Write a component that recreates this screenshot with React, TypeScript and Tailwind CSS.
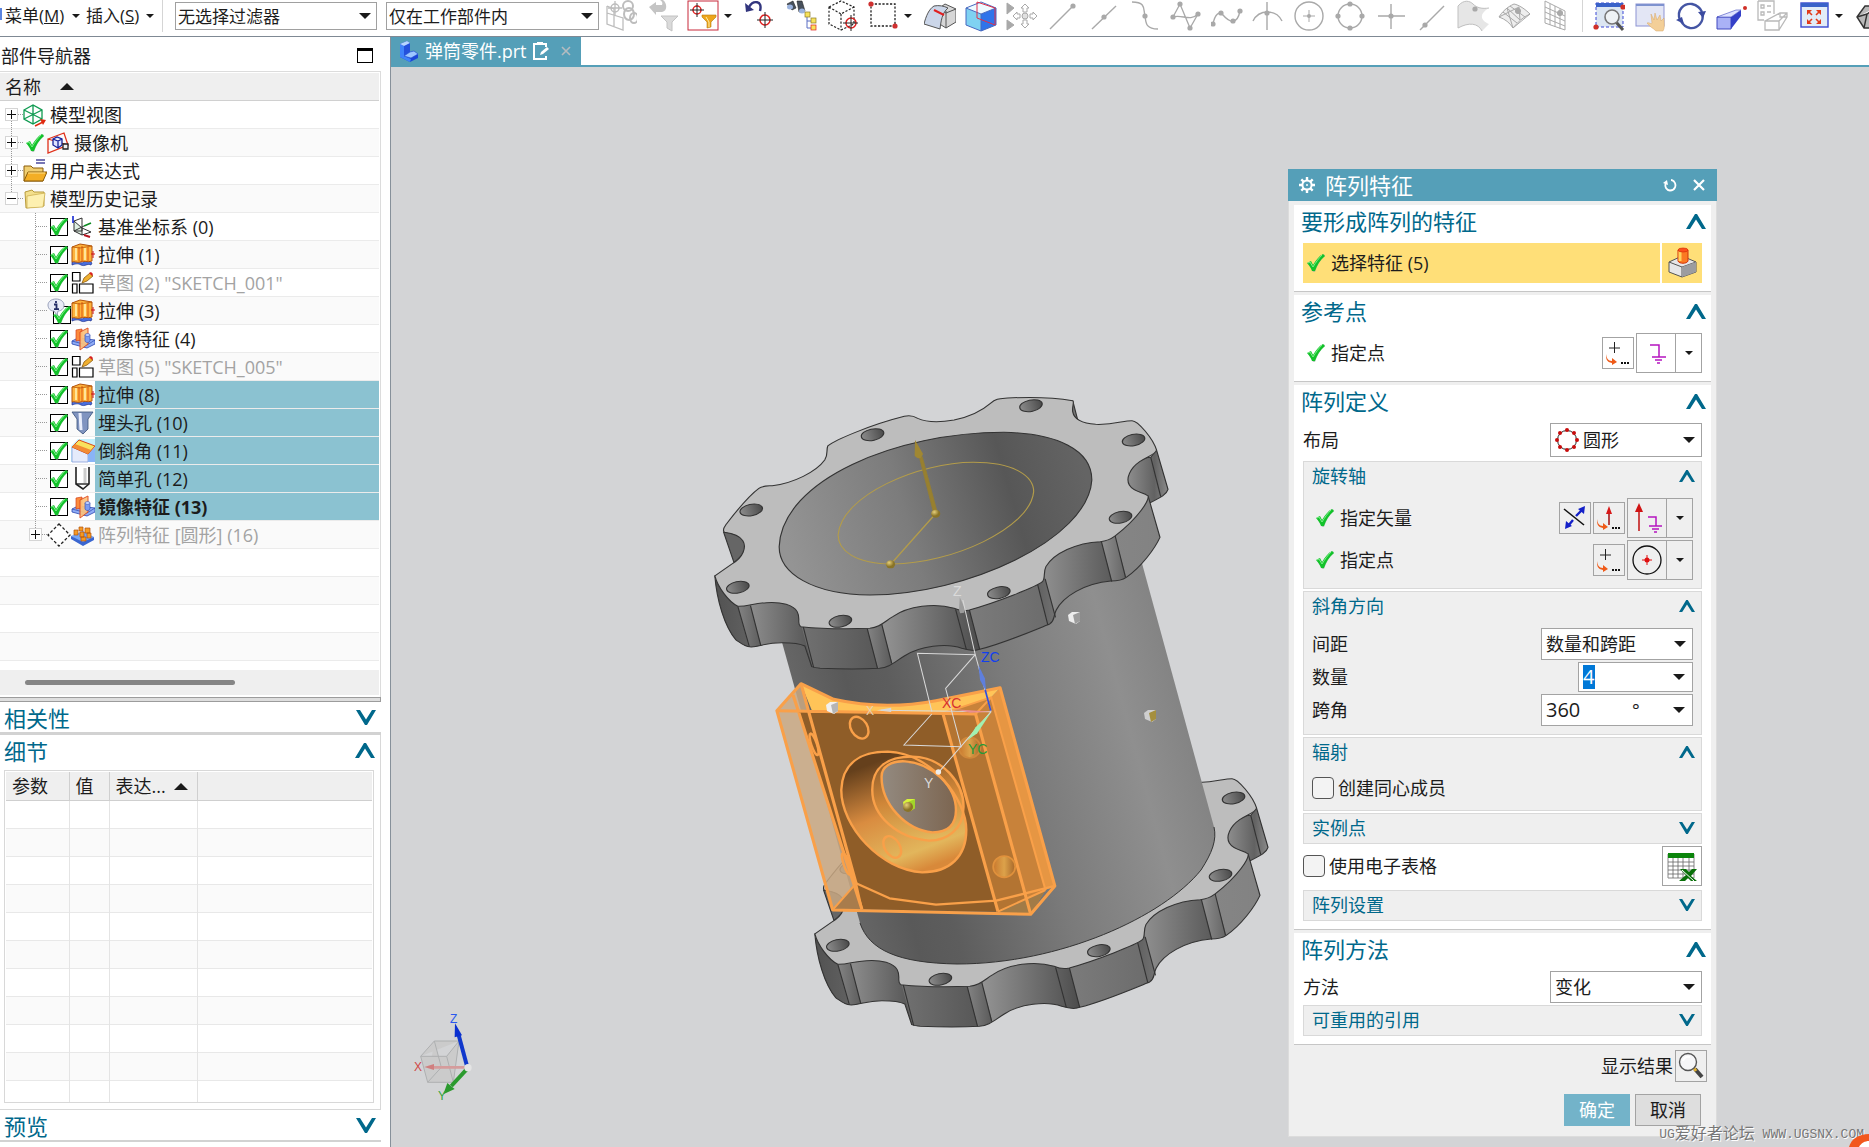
import { useState } from "react";
import type { ReactNode } from "react";

/* ---------- shared bits ---------- */

function Tri({ up, small }: { up?: boolean; small?: boolean }) {
  return (
    <svg
      viewBox="0 0 12 6"
      preserveAspectRatio="none"
      className={`pointer-events-none shrink-0 ${small ? "h-1 w-2" : up ? "h-[7px] w-[14px]" : "h-[6px] w-3"}`}
      aria-hidden="true"
    >
      <path d={up ? "M0 6L6 0L12 6Z" : "M0 0H12L6 6Z"} fill="#1a1a1a" />
    </svg>
  );
}

function Chevron({ open, small }: { open: boolean; small?: boolean }) {
  return (
    <svg
      viewBox="0 0 20 15"
      className={`shrink-0 ${small ? "h-3 w-4" : "h-[15px] w-5"}`}
      aria-hidden="true"
    >
      <path
        d={open ? "M0 15L9 0H11L20 15H16L10 5.500L4 15Z" : "M0 0H4L10 9.500L16 0H20L11 15H9Z"}
        fill="#00688b"
      />
    </svg>
  );
}

function GreenCheck() {
  return (
    <svg viewBox="0 0 18 18" className="h-[18px] w-[18px] shrink-0" aria-hidden="true">
      <path d="M1 10L4 8L7 12C9 7 12 3 17 0L18 2C13 6 10 12 8 18H6C5 15 3 12 1 10Z" fill="#8fa69a" opacity=".6" />
      <path d="M0 9L4 7L6 11C9 6 12 2 16 0L18 2C13 6 10 11 8 17H5C4 14 2 11 0 9Z" fill="#12c22a" />
      <path d="M1 9L3 8L6 13C9 8 12 4 15 1" fill="none" stroke="#7df08a" strokeWidth="1" />
    </svg>
  );
}

/* ---------- top toolbar ---------- */

const G = "#a9a9a9";

function Target({ x, y, r = 4, c = "#e02020", k = "#222" }: { x: number; y: number; r?: number; c?: string; k?: string }) {
  return (
    <g fill="none">
      <circle cx={x} cy={y} r={r} stroke={c} strokeWidth="1.5" />
      <path d={`M${x - r - 3} ${y}H${x + r + 3}M${x} ${y - r - 3}V${y + r + 3}`} stroke={k} />
    </g>
  );
}

function Dot({ x, y, c = G }: { x: number; y: number; c?: string }) {
  return <circle cx={x} cy={y} r="2.6" fill={c} />;
}

const icons: Record<string, ReactNode> = {
  chain: (
    <g fill="none" stroke="#bdbdbd" strokeWidth="1.3">
      <path d="M2 6V24L18 30V18L2 13M9 8V27M2 6L9 9" />
      <Target x={10} y={8} c="#bdbdbd" k="#bdbdbd" />
      <ellipse cx="23" cy="6" rx="5" ry="5" strokeWidth="2" />
      <ellipse cx="24" cy="14" rx="5" ry="6" strokeWidth="2" />
      <ellipse cx="29" cy="18" rx="4" ry="5" strokeWidth="2" />
    </g>
  ),
  undoFilter: (
    <g>
      <path d="M3 7L10 2V5H16C17 3 16 1 14 0H17C21 3 22 11 16 12H10V15Z" fill="#c4c4c4" />
      <path d="M15 16H32L26 22V31L21 28V22Z" fill="#dadada" stroke="#c2c2c2" />
    </g>
  ),
  filterOn: (
    <g>
      <rect x="1" y="1" width="30" height="29" fill="#fff" stroke="#c8293a" />
      <Target x={10} y={10} />
      <path d="M15 15H29V17L24 22V27L20 28V22L15 17Z" fill="#eda51c" stroke="#b57a10" strokeWidth=".6" />
      <path d="M19 17L22 22V27" stroke="#fff0a8" fill="none" />
    </g>
  ),
  undoTarget: (
    <g>
      <path d="M5 7C9 0 19 0 16 11" fill="none" stroke="#32357e" strokeWidth="2.4" />
      <path d="M1 3L2 12L10 10Z" fill="#32357e" />
      <Target x={21} y={20} r={5} />
    </g>
  ),
  binoculars: (
    <g>
      <path d="M2 4L8 1L11 8L7 10ZM12 1L17 1L20 11L14 12Z" fill="#47505c" stroke="#222" strokeWidth=".6" />
      <ellipse cx="5" cy="7" rx="3" ry="2.5" fill="#9cb4df" />
      <ellipse cx="17" cy="11" rx="3" ry="2.5" fill="#9cb4df" />
      <path d="M22 17V28M22 21H26M22 28H26" stroke="#5b6fc4" fill="none" />
      <g fill="#f7e25a" stroke="#8a7a28" strokeWidth=".7">
        <rect x="20" y="12" width="5" height="5" />
        <rect x="26" y="18" width="5" height="5" />
        <rect x="26" y="25" width="5" height="5" stroke="#e02020" />
      </g>
    </g>
  ),
  dashCube: (
    <g>
      <path d="M3 7L15 1L28 7V24L15 30L3 24ZM3 7L15 14L28 7M15 14V30" fill="none" stroke="#222" strokeWidth="1.2" strokeDasharray="2.2 1.6" />
      <Target x={25} y={23} r={5} />
    </g>
  ),
  dashRect: (
    <g>
      <rect x="4" y="4" width="24" height="22" fill="none" stroke="#222" strokeWidth="1.3" strokeDasharray="2.2 1.6" />
      <Dot x={4} y={4} c="#cf3030" />
      <Dot x={28} y={26} c="#cf3030" />
    </g>
  ),
  book: (
    <g stroke="#555" strokeWidth="1">
      <path d="M14 9L21 4L32 9V22L22 28L14 23Z" fill="#d7d7d7" />
      <path d="M22 11V28M14 9L22 13L32 9" fill="none" />
      <path d="M10 6C15 5 20 6 24 8C18 13 17 21 16 29L0 24C2 16 5 9 10 6Z" fill="#cbd6e9" />
      <path d="M10 10L20 15" stroke="#e02020" strokeWidth="2" />
    </g>
  ),
  blueCube: (
    <g>
      <path d="M1 8L16 14V31L1 25Z" fill="#7fd2f2" />
      <path d="M16 14L31 8V25L16 31Z" fill="#2f74ea" />
      <path d="M1 8L16 2L31 8L16 14Z" fill="#eefaff" />
      <path d="M1 8L16 2L31 8V25L16 31L1 25ZM1 8L16 14L31 8M16 14V31" fill="none" stroke="#4668c0" />
      <path d="M12 2L30 8V25L12 18Z" fill="none" stroke="#e0304a" />
    </g>
  ),
  arrows4: (
    <g fill="#fff" stroke={G}>
      <path d="M1 3V14L8 8ZM1 20V30L8 25Z" fill={G} />
      <path d="M19 4L23 8H21V12H17V8H15ZM19 28L23 24H21V20H17V24H15ZM7 16L11 12V14H14V18H11V20ZM31 16L27 12V14H24V18H27V20Z" />
      <circle cx="19" cy="16" r="3" fill="#e0e0e0" />
    </g>
  ),
  lineEnd: (
    <g>
      <path d="M3 29L26 6" stroke={G} strokeWidth="1.4" />
      <Dot x={26} y={6} />
    </g>
  ),
  lineMid: (
    <g>
      <path d="M4 29L28 6" stroke={G} strokeWidth="1.4" />
      <Dot x={16} y={17} />
    </g>
  ),
  sCurve: (
    <g>
      <path d="M3 2C18 2 14 10 16 16C17 22 16 29 29 29" fill="none" stroke={G} strokeWidth="1.4" />
      <Dot x={16} y={16} />
    </g>
  ),
  spline: (
    <g>
      <path d="M3 17L10 4L20 28L28 14C20 22 12 14 3 17" fill="none" stroke={G} strokeWidth="1.3" />
      <Dot x={3} y={17} />
      <Dot x={10} y={4} />
      <Dot x={20} y={28} />
      <Dot x={28} y={14} />
    </g>
  ),
  wave: (
    <g>
      <path d="M2 24C4 14 8 11 12 15C18 22 26 26 29 11" fill="none" stroke={G} strokeWidth="1.4" />
      <Dot x={2} y={24} />
      <Dot x={10} y={13} />
      <Dot x={22} y={21} />
      <Dot x={29} y={11} />
    </g>
  ),
  arcCross: (
    <g>
      <path d="M1 21C7 9 24 9 30 21M15 2V30" fill="none" stroke={G} strokeWidth="1.4" />
      <Dot x={15} y={13} />
    </g>
  ),
  circleCenter: (
    <g>
      <circle cx="16" cy="16" r="14" fill="none" stroke={G} strokeWidth="1.4" />
      <path d="M10 16H22M16 10V22" stroke={G} />
      <circle cx="16" cy="16" r="2" fill={G} />
    </g>
  ),
  quadrant: (
    <g>
      <circle cx="16" cy="16" r="12" fill="none" stroke={G} strokeWidth="1.4" />
      <Dot x={16} y={4} />
      <Dot x={16} y={28} />
      <Dot x={4} y={16} />
      <Dot x={28} y={16} />
    </g>
  ),
  plus: (
    <g>
      <path d="M3 16H30M16 4V29" stroke={G} strokeWidth="1.4" />
      <Dot x={16} y={16} />
    </g>
  ),
  lineLow: (
    <g>
      <path d="M4 30L28 6" stroke={G} strokeWidth="1.4" />
      <Dot x={9} y={25} />
    </g>
  ),
  surface: (
    <g>
      <path d="M1 6C7 -1 13 1 16 4C20 8 25 9 32 8C23 13 22 20 32 24L25 31C21 23 12 22 1 28Z" fill="#e6e6e6" />
      <path d="M1 28V6C7 -1 13 1 16 4C20 8 25 9 32 8M1 28C12 22 21 23 25 31" fill="none" stroke="#c0c0c0" />
      <Dot x={18} y={9} />
    </g>
  ),
  facets: (
    <g fill="#eee" stroke={G}>
      <path d="M1 17C4 12 9 7 16 4C21 5 27 9 32 14C25 17 20 22 15 28C12 23 7 19 1 17Z" />
      <path d="M1 17L21 7L22 20M9 8L15 28L32 14M9 8L22 20M5 12L19 23M12 6L27 17" fill="none" />
      <Dot x={20} y={11} />
    </g>
  ),
  gridPlane: (
    <g fill="none" stroke={G}>
      <path d="M6 1L26 11V30L6 23ZM6 7L26 16M6 12L26 21M6 18L26 26M11 4V25M16 6V27M21 9V29" />
      <Dot x={21} y={13} />
    </g>
  ),
  zoomWin: (
    <g>
      <rect x="3" y="3" width="27" height="24" fill="#dce6f2" stroke="#3c49d6" strokeDasharray="3 2" />
      <rect x="3" y="3" width="27" height="4" fill="#3a62c9" />
      <path d="M23 22L30 30" stroke="#555" strokeWidth="3" />
      <circle cx="19" cy="17" r="7" fill="#eef2f5" stroke="#777" strokeWidth="1.6" />
      <Dot x={30} y={7} c="#d03028" />
      <Dot x={3} y={27} c="#d03028" />
    </g>
  ),
  pan: (
    <g>
      <rect x="2" y="4" width="28" height="22" fill="#e3e6f5" stroke="#8d93d3" />
      <rect x="2" y="4" width="28" height="2" fill="#7e92cf" />
      <path d="M13 23C16 22 17 25 18 23L17 14L20 20L21 13L23 20L26 15L27 21L30 18C30 24 31 28 29 31H22C19 28 16 27 13 23Z" fill="#f3cf98" stroke="#d6a766" strokeWidth=".5" />
    </g>
  ),
  rotate: (
    <g fill="none" stroke="#4455a4" strokeWidth="2.4">
      <path d="M5 20C1 10 9 3 17 4C21 5 25 7 27 12M27 13C30 22 22 29 15 28C10 27 8 25 6 21" />
      <path d="M1 20L7 17L9 24ZM23 12L31 11L28 18Z" fill="#3b4ba0" stroke="none" />
    </g>
  ),
  perspective: (
    <g>
      <path d="M1 17L25 10L15 16V29L1 28Z" fill="#7b86ea" />
      <path d="M1 17H15V29H1Z" fill="#aab2f6" stroke="#4049c0" />
      <path d="M15 17L25 10V16L15 29Z" fill="#3440c8" />
      <path d="M1 17L20 10H25L15 17Z" fill="#dfe3ff" stroke="#4049c0" strokeWidth=".6" />
      <circle cx="29" cy="8" r="2" fill="#d03028" />
    </g>
  ),
  listBox: (
    <g fill="none" stroke="#b9b9b9" strokeWidth="1.3">
      <path d="M1 1H17V14M1 1V20H7M4 5H7V8H4ZM4 12H7V15H4ZM10 6H14M10 12H14" />
      <path d="M8 21H22V30H8ZM8 21L23 13H30V17L22 30M22 21L30 13M23 13V17H30" />
    </g>
  ),
  fit: (
    <g>
      <rect x="3" y="3" width="27" height="24" fill="#e2ecf7" stroke="#3948d0" strokeWidth="1.4" />
      <rect x="3" y="3" width="27" height="4" fill="#3a62c9" />
      <path d="M9 10H14L9 15ZM23 10H18L23 15ZM9 24H14L9 19ZM23 24H18L23 19Z" fill="#e23a1a" />
      <path d="M10 11L14 15M22 11L18 15M10 23L14 19M22 23L18 19" stroke="#e23a1a" strokeWidth="1.6" />
    </g>
  ),
  gem: <path d="M2 17L10 6H24V28H9ZM2 17L12 14L24 6M12 14L9 28" fill="#b9b9b9" stroke="#333" strokeWidth="1.4" />,
};

function ToolIcon({ name, label }: { name: string; label: string }) {
  return (
    <button type="button" aria-label={label} className="flex h-8 w-[41px] shrink-0 pl-1">
      <svg viewBox="0 0 32 32" className="h-8 w-8">
        {icons[name]}
      </svg>
    </button>
  );
}

const groupA = ["chain", "undoFilter", "filterOn"];
const groupB = ["undoTarget", "binoculars", "dashCube", "dashRect"];
const groupC = [
  "book", "blueCube", "arrows4", "lineEnd", "lineMid", "sCurve", "spline", "wave",
  "arcCross", "circleCenter", "quadrant", "plus", "lineLow", "surface", "facets", "gridPlane",
];
const groupD = ["zoomWin", "pan", "rotate", "perspective", "listBox", "fit"];

function ToolRow({ names }: { names: string[] }) {
  return (
    <>
      {names.map((n) => (
        <ToolIcon key={n} name={n} label={n} />
      ))}
    </>
  );
}

function DropButton({ label }: { label: string }) {
  return (
    <button type="button" aria-label={label} className="flex h-8 w-4 shrink-0 items-center">
      <Tri small />
    </button>
  );
}

function Toolbar() {
  return (
    <header className="flex h-[37px] shrink-0 overflow-hidden border-b border-[#7f8994] bg-white text-[17px] leading-7">
      <div className="mt-2 h-3 w-[2px] shrink-0 bg-[#5b84e0]" />
      <button type="button" className="flex h-8 w-[78px] shrink-0 items-center justify-between pl-[3px] whitespace-nowrap">
        <span>菜单(<u>M</u>)</span>
        <Tri small />
      </button>
      <button type="button" className="flex h-8 w-[74px] shrink-0 items-center justify-between pl-[6px] whitespace-nowrap">
        <span>插入(<u>S</u>)</span>
        <Tri small />
      </button>
      <div className="ml-2 h-8 w-px shrink-0 bg-[#d5d5d5]" />
      <div className="relative mt-[2px] ml-3 h-7 w-[202px] shrink-0">
        <select aria-label="类型过滤器" className="h-full w-full appearance-none border border-[#a0a0a0] bg-white pl-[2px]">
          <option>无选择过滤器</option>
        </select>
        <span className="pointer-events-none absolute top-[11px] right-[6px] flex">
          <Tri />
        </span>
      </div>
      <div className="relative mt-[2px] ml-[9px] h-7 w-[213px] shrink-0">
        <select aria-label="选择范围" className="h-full w-full appearance-none border border-[#a0a0a0] bg-white pl-[2px]">
          <option>仅在工作部件内</option>
        </select>
        <span className="pointer-events-none absolute top-[11px] right-[6px] flex">
          <Tri />
        </span>
      </div>
      <div className="ml-[2px] flex shrink-0">
        <ToolRow names={groupA} />
        <DropButton label="过滤器选项" />
        <ToolRow names={groupB} />
        <DropButton label="选择方式" />
        <ToolRow names={groupC} />
        <div className="mx-[6px] h-8 w-px bg-[#d5d5d5]" />
        <ToolRow names={groupD} />
        <DropButton label="视图选项" />
        <ToolIcon name="gem" label="gem" />
      </div>
    </header>
  );
}

/* ---------- part navigator ---------- */

const treeIcons: Record<string, ReactNode> = {
  views: (
    <g fill="none" stroke="#0f9a50">
      <path d="M1 7L10 2L19 7V16L10 21L1 16ZM1 7L19 16M19 7L1 16M10 2V21" strokeWidth="1.3" />
      <path d="M12 23L20 19" stroke="#e02a10" strokeWidth="1.5" />
      <path d="M17 16L23 17L20 22Z" fill="#e02a10" stroke="none" />
    </g>
  ),
  camera: (
    <g fill="none" stroke="#e0301a" strokeWidth="1.3">
      <path d="M1 8L17 2L21 14L1 22ZM1 8L21 14" />
      <path d="M6 8L10 6L15 8V14L11 17L6 14ZM6 8L11 10L15 8M11 10V17" stroke="#16229a" fill="#dfe4ff" />
      <path d="M16 13H21V18H16Z" stroke="#222" fill="#f1f1f1" />
    </g>
  ),
  exprFolder: (
    <g>
      <path d="M1 7H8L10 9H20V22H1Z" fill="#f0cf72" stroke="#8a5c0a" />
      <path d="M5 13H24L20 22H1Z" fill="#f3ae25" stroke="#8a5c0a" />
      <path d="M5 14H22" stroke="#ffe08a" />
      <path d="M13 1H22M13 4H22" stroke="#4b4a9c" strokeWidth="1.3" />
    </g>
  ),
  folder: (
    <g>
      <path d="M2 5L9 3L11 5H21V19L3 21Z" fill="#f3df8c" stroke="#b89b3c" />
      <path d="M4 9L22 6L20 20L4 21Z" fill="#fdf0b0" stroke="#c8ab48" strokeWidth=".7" />
    </g>
  ),
  datum: (
    <g fill="none" stroke="#333">
      <path d="M3 6V16L11 20V13ZM3 16L13 11" fill="#dff0e4" />
      <path d="M3 6L11 3V16L3 16M11 13L20 17L11 20" />
      <path d="M2 8V1" stroke="#1328d4" strokeWidth="1.6" />
      <path d="M13 11L20 8" stroke="#0b8a20" strokeWidth="1.6" />
      <path d="M13 20L19 22" stroke="#b51420" strokeWidth="2" />
    </g>
  ),
  extrude: (
    <g>
      <path d="M1 19C5 16 9 22 13 19C16 16 19 18 21 20L20 22C16 20 14 24 10 22C7 20 4 21 1 22Z" fill="#4a6fe0" stroke="#1c2f8a" strokeWidth=".7" />
      <path d="M1 4L9 1L21 3V18C16 20 13 17 9 19C6 20 3 18 1 19Z" fill="#fdb23c" stroke="#b35208" />
      <path d="M5 5V17M14 5V17" stroke="#ffe59a" strokeWidth="2" />
      <path d="M8 4V18M11 3V19M17 4V18" stroke="#e0560c" />
      <path d="M1 4L9 5L21 3" stroke="#b35208" fill="none" strokeWidth=".7" />
      <path d="M22 8V15M20 11H24" stroke="#d01010" />
    </g>
  ),
  sketch: (
    <g fill="#fff" stroke="#000" strokeWidth="1.2">
      <path d="M1.500 1.500H9V10H1.500ZM1.500 13H6V22H1.500ZM8.500 13H22V22H8.500Z" />
      <path d="M11 12L13 7L19 2L22 5L16 10Z" fill="#f0b030" stroke="#8a5a10" strokeWidth=".8" />
      <path d="M18 2L20 1L22 3L21 5Z" fill="#d82020" stroke="none" />
    </g>
  ),
  mirror: (
    <g>
      <path d="M1 14L7 11L24 13V17L16 21L1 17Z" fill="#8facf5" stroke="#2845b0" strokeWidth=".8" />
      <path d="M1 14L16 18L24 13" fill="none" stroke="#2845b0" strokeWidth=".7" />
      <path d="M5 3L11 2V13L5 14Z" fill="#fb8a3c" stroke="#d4401a" strokeWidth=".7" />
      <path d="M9 5L17 1V17L9 23Z" fill="#fcc27c" stroke="#e0481a" opacity=".92" />
      <path d="M14 8V14C15 16 18 16 19 14V8Z" fill="#7d9cf0" stroke="#2845b0" strokeWidth=".6" />
      <ellipse cx="16.500" cy="8" rx="2.500" ry="1.500" fill="#c0d2ff" stroke="#2845b0" strokeWidth=".5" />
    </g>
  ),
  sunk: (
    <g>
      <path d="M1 1H22L17 8V18L12 23L6 18V8Z" fill="#8094c0" stroke="#38507a" strokeWidth=".8" />
      <path d="M9 2L10 19" stroke="#e9eefb" strokeWidth="3" />
    </g>
  ),
  chamfer: (
    <g>
      <path d="M0 0H24V23H0Z" fill="#c5f0fb" />
      <path d="M0 0H7L0 7Z" fill="#fff" />
      <path d="M1 8L17 15V23H1Z" fill="#e5ebfb" stroke="#7a94d6" strokeWidth=".7" />
      <path d="M17 15L24 8V23H17Z" fill="#8ab4f6" />
      <path d="M1 8L8 1L24 7L17 15Z" fill="#f9e25e" stroke="#d84a1a" />
      <path d="M1 8L4 5L20 11L17 15Z" fill="#f28c34" />
    </g>
  ),
  hole: (
    <g>
      <path d="M5 0V17L12 22L18 17V0" fill="#fff" stroke="#222" strokeWidth="1.6" />
      <path d="M5 17H18" stroke="#222" strokeWidth="1.4" />
      <path d="M14 1V16" stroke="#ccc" strokeWidth="3" />
    </g>
  ),
  pattern: (
    <g>
      <path d="M0 13L12 8L23 14L12 21Z" fill="#77a7f4" />
      <path d="M0 13L12 19L23 14V17L12 23L0 16Z" fill="#3a66d0" />
      <g fill="#f59a23" stroke="#b3520c" strokeWidth=".7">
        <path d="M8 4H12V8H8ZM3 7H7V12H3ZM14 5H19V10H14ZM9 9H13V14H9ZM16 10H20V15H16ZM10 14H15V18H10Z" />
      </g>
    </g>
  ),
};

type Node = {
  label: string;
  icon: string;
  depth: 0 | 1;
  expand?: "+" | "-";
  mark?: "check" | "box" | "info" | "off";
  dim?: boolean;
  selected?: boolean;
  bold?: boolean;
};

const nodes: Node[] = [
  { label: "模型视图", icon: "views", depth: 0, expand: "+" },
  { label: "摄像机", icon: "camera", depth: 0, expand: "+", mark: "check" },
  { label: "用户表达式", icon: "exprFolder", depth: 0, expand: "+" },
  { label: "模型历史记录", icon: "folder", depth: 0, expand: "-" },
  { label: "基准坐标系 (0)", icon: "datum", depth: 1, mark: "box" },
  { label: "拉伸 (1)", icon: "extrude", depth: 1, mark: "box" },
  { label: '草图 (2) "SKETCH_001"', icon: "sketch", depth: 1, mark: "box", dim: true },
  { label: "拉伸 (3)", icon: "extrude", depth: 1, mark: "info" },
  { label: "镜像特征 (4)", icon: "mirror", depth: 1, mark: "box" },
  { label: '草图 (5) "SKETCH_005"', icon: "sketch", depth: 1, mark: "box", dim: true },
  { label: "拉伸 (8)", icon: "extrude", depth: 1, mark: "box", selected: true },
  { label: "埋头孔 (10)", icon: "sunk", depth: 1, mark: "box", selected: true },
  { label: "倒斜角 (11)", icon: "chamfer", depth: 1, mark: "box", selected: true },
  { label: "简单孔 (12)", icon: "hole", depth: 1, mark: "box", selected: true },
  { label: "镜像特征 (13)", icon: "mirror", depth: 1, mark: "box", selected: true, bold: true },
  { label: "阵列特征 [圆形] (16)", icon: "pattern", depth: 1, expand: "+", mark: "off", dim: true },
];

function Expander({ sign, first, last }: { sign: "+" | "-"; first?: boolean; last?: boolean }) {
  return (
    <span className="flex w-[13px] shrink-0 flex-col items-center self-stretch">
      <span className={`flex-1 border-l border-dotted ${first ? "border-transparent" : "border-[#999]"}`} />
      <button type="button" aria-label="展开" className="h-[13px] w-[13px] border border-[#d5d5d5] bg-white">
        <svg viewBox="0 0 11 11" className="block h-[11px] w-[11px]">
          <path d={sign === "+" ? "M1 5.500H10M5.500 1V10" : "M1 5.500H10"} stroke="#111" />
        </svg>
      </button>
      <span className={`flex-1 border-l border-dotted ${last ? "border-transparent" : "border-[#999]"}`} />
    </span>
  );
}

function NodeMark({ mark, label }: { mark: Node["mark"]; label: string }) {
  if (mark === "off") {
    return (
      <svg viewBox="0 0 24 24" className="h-6 w-6 shrink-0" aria-hidden="true">
        <path d="M12 1L23 12L12 23L1 12Z" fill="#fff" stroke="#222" strokeWidth="1.3" strokeDasharray="3 2" />
      </svg>
    );
  }
  return (
    <label className={`relative flex w-[18px] shrink-0 ${mark === "info" ? "ml-[5px] self-end" : "mr-[3px] ml-[2px]"}`}>
      <input
        type="checkbox"
        defaultChecked
        aria-label={label}
        className="h-[18px] w-[18px] appearance-none border border-black bg-white"
      />
      <span className="pointer-events-none absolute top-0 left-0">
        <GreenCheck />
      </span>
      {mark === "info" && (
        <svg viewBox="0 0 18 18" className="absolute -top-2 -left-[6px] h-[18px] w-[18px]" aria-hidden="true">
          <path d="M9 1C14 1 17 4 17 7C17 11 14 13 11 13L10 17L7 13C3 13 1 10 1 7C1 4 4 1 9 1Z" fill="#e8ebf7" stroke="#9aa2bb" />
          <path d="M9 3V5M7 6.500H9.500V11M7 11.200H12" stroke="#222c66" strokeWidth="1.8" fill="none" />
        </svg>
      )}
    </label>
  );
}

function TreeRow({ node, index }: { node: Node; index: number }) {
  return (
    <li className={`flex h-7 items-center border-b border-[#ebebeb] ${index % 2 ? "bg-[#fafafa]" : "bg-white"}`}>
      {node.depth === 0 ? (
        <>
          <span className="w-[5px] shrink-0" />
          <Expander sign={node.expand!} first={index === 0} last={node.expand === "-"} />
          <span className="w-[5px] shrink-0 border-b border-dotted border-[#999]" />
          {node.mark === "check" && (
            <span className="flex w-6 shrink-0 justify-center">
              <GreenCheck />
            </span>
          )}
        </>
      ) : node.expand ? (
        <>
          <span className="w-[29px] shrink-0" />
          <Expander sign={node.expand} last />
          <span className="w-[5px] shrink-0 border-b border-dotted border-[#999]" />
          <NodeMark mark={node.mark} label={node.label} />
        </>
      ) : (
        <>
          <span className="ml-[35px] w-3 shrink-0 self-stretch border-l border-dotted border-[#999]">
            <span className="block h-1/2 border-b border-dotted border-[#999]" />
          </span>
          <span className="w-px shrink-0" />
          <NodeMark mark={node.mark} label={node.label} />
        </>
      )}
      <svg viewBox="0 0 24 24" className="h-6 w-6 shrink-0" aria-hidden="true">
        {treeIcons[node.icon]}
      </svg>
      <span
        className={`h-full flex-1 pl-[3px] leading-[29px] whitespace-nowrap ${node.selected ? "bg-[#8bc2d1]" : ""} ${
          node.dim ? "text-[#a3a3a3]" : ""
        } ${node.bold ? "font-bold" : ""}`}
      >
        {node.label}
      </span>
    </li>
  );
}

function PanelHeading({ title, open }: { title: string; open: boolean }) {
  return (
    <button
      type="button"
      aria-expanded={open}
      className="flex h-[30px] w-full shrink-0 items-center justify-between pr-[5px] pl-1 text-[22px] leading-8 text-[#00688b]"
    >
      <span className="pt-px">{title}</span>
      <Chevron open={open} />
    </button>
  );
}

function Navigator() {
  return (
    <aside className="flex w-[391px] shrink-0 flex-col border-r border-[#86909a] bg-white pr-[9px] text-[18px]">
      <div className="flex h-[34px] shrink-0 items-center justify-between pt-[3px] pr-2 pl-px">
        <h2 className="leading-7">部件导航器</h2>
        <button type="button" aria-label="最大化" className="h-[15px] w-4 border border-t-[3px] border-black" />
      </div>
      <div className="shrink-0 border-t border-r border-[#dcdcdc] pt-px pr-px">
        <div className="flex h-7 items-center gap-[19px] border-b border-[#d0d0d0] bg-[#efefef] pl-[5px] leading-[29px]">
          <span className="pt-[2px]">名称</span>
          <Tri up />
        </div>
        <ul>
          {nodes.map((n, i) => (
            <TreeRow key={n.label} node={n} index={i} />
          ))}
          {[16, 17, 18, 19].map((i) => (
            <li key={i} className={`h-7 border-b border-[#ebebeb] ${i % 2 ? "bg-[#fafafa]" : "bg-white"}`} />
          ))}
        </ul>
        <div className="mt-[9px] mb-[2px] flex h-[25px] items-center bg-[#efefef] pl-[25px]">
          <div className="h-[5px] w-[210px] rounded-full bg-[#858585]" />
        </div>
      </div>
      <div className="h-[5px] shrink-0 border-y border-r border-[#9c9c9c] bg-[#dedede]" />
      <div className="shrink-0 border-b-[3px] border-[#d2d2d2]">
        <PanelHeading title="相关性" open={false} />
      </div>
      <section className="flex min-h-0 flex-1 flex-col border-r border-b border-[#d8d8d8] pb-[6px]">
        <PanelHeading title="细节" open />
        <div className="mt-[5px] mr-[6px] ml-1 min-h-0 flex-1 overflow-hidden border border-[#d8d8d8] p-px">
          <table className="w-full table-fixed border-collapse text-left">
            <thead>
              <tr className="h-7 border-b border-[#cfcfcf] bg-[#efefef] leading-[26px]">
                <th className="w-[63px] border-r border-[#cfcfcf] pt-px pl-[6px] font-normal">参数</th>
                <th className="w-10 border-r border-[#cfcfcf] pt-px pl-[6px] font-normal">值</th>
                <th className="w-[88px] border-r border-[#cfcfcf] pt-px pl-[6px] font-normal">
                  <span className="flex items-center gap-2">
                    表达... <Tri up />
                  </span>
                </th>
                <th />
              </tr>
            </thead>
            <tbody>
              {Array.from({ length: 11 }, (_, i) => (
                <tr key={i} className={`h-7 border-b border-[#e8e8e8] ${i % 2 ? "bg-[#fafafa]" : "bg-white"}`}>
                  <td className="border-r border-[#e4e4e4]" />
                  <td className="border-r border-[#e4e4e4]" />
                  <td className="border-r border-[#e4e4e4]" />
                  <td />
                </tr>
              ))}
            </tbody>
          </table>
        </div>
      </section>
      <div className="mb-[5px] shrink-0 border-b-2 border-[#d2d2d2]">
        <PanelHeading title="预览" open={false} />
      </div>
    </aside>
  );
}

/* ---------- 3D model ---------- */

const flangeTop =
  "M65 588L108 553C140 533 148 500 138 482C128 465 110 460 90 457C83 450 90 440 95 432C120 395 150 350 180 325C190 317 200 318 215 317C270 310 330 275 352 240C362 222 355 212 360 198C380 180 470 135 560 109C575 105 585 108 595 115C620 128 660 126 690 120C740 108 765 90 785 70C800 55 810 56 830 54C880 51 950 52 1000 62C1005 66 998 80 1000 95C1003 115 1020 130 1060 133C1110 135 1130 122 1155 122C1170 122 1210 175 1219 210C1218 222 1195 230 1175 245C1150 265 1138 295 1148 315C1160 338 1185 335 1197 348C1200 360 1175 410 1111 468C1095 482 1085 484 1072 485C1010 488 950 520 930 560C922 580 930 595 920 606C905 620 800 668 730 690C715 694 700 690 690 685C640 668 570 678 530 710C505 728 495 742 470 745C400 748 330 745 290 740C278 733 290 715 280 695C270 675 240 665 200 668C165 670 150 680 125 679C100 665 72 620 65 588Z";

const flangeWall =
  "M65 588C70 660 90 740 120 780C140 795 145 800 160 801C185 799 200 788 240 788C270 788 290 792 300 798L318 860C325 863 330 864 340 865C400 868 450 868 495 865C520 862 530 850 560 828C600 798 670 788 710 805C730 812 745 814 757 808C820 790 890 755 940 732C955 720 948 710 957 690C975 650 1030 610 1100 603C1120 603 1130 600 1140 592C1180 560 1215 505 1228 472L1197 348L900 400L300 600Z";

// top ends of the wall edges; each wall lies between two neighbours
const corners = [
  [40, 640], [125, 679], [158, 677], [292, 741], [463, 745], [500, 728], [694, 688],
  [730, 690], [908, 612], [928, 597], [1075, 485], [1111, 468], [1240, 340],
];

const wallColors = [
  ["#4c4c4c", "#626262"],
  ["#8a8a8a", "#555555"],
  ["#909090", "#505050"],
  ["#727272", "#565656"],
  ["#8c8c8c", "#505050"],
  ["#999999", "#525252"],
  ["#646464", "#484848"],
  ["#7d7d7d", "#6a6a6a"],
  ["#5c5c5c", "#777777"],
  ["#989898", "#505050"],
  ["#999999", "#5a5a5a"],
  ["#868686", "#808080"],
];

const edges = [
  "M125 679L155 800", "M158 677L185 797", "M296 741L323 862", "M463 745L490 865", "M500 728L527 850",
  "M694 688L722 808", "M730 690L757 808", "M908 612L935 735", "M928 597L955 712", "M1075 485L1102 605",
  "M1111 468L1138 592",
];

const boltHoles = [
  [891, 77], [477, 164], [160, 390], [125, 622], [393, 724], [807, 638], [1125, 412], [1159, 180],
];

// walls lean with the part axis: 28 across for every 120 down
const leanX = ([x, y]: number[], at: number) => x + ((at - y) * 28) / 120;

function Flange({ id }: { id: string }) {
  return (
    <g stroke="#333" strokeWidth="3">
      <defs>
        <clipPath id={`${id}-wall`}>
          <path d={flangeWall} />
        </clipPath>
        {wallColors.map(([a, b], i) => (
          <linearGradient key={i} id={`${id}-f${i}`}>
            <stop offset="0" stopColor={a} />
            <stop offset="1" stopColor={b} />
          </linearGradient>
        ))}
        <linearGradient id={`${id}-side`}>
          <stop offset="0" stopColor="#969696" />
          <stop offset=".7" stopColor="#626262" />
          <stop offset="1" stopColor="#8a8a8a" />
        </linearGradient>
        <linearGradient id={`${id}-hole`}>
          <stop offset="0" stopColor="#8c8c8c" />
          <stop offset="1" stopColor="#4a4a4a" />
        </linearGradient>
      </defs>
      <path d="M1204 232L1219 210L1249 328C1245 345 1225 355 1203 368L1130 330V240Z" fill={`url(#${id}-side)`} />
      <path d="M1204 232L1230 350" />
      <path d="M88 457L115 548L142 520L150 460Z" fill="#666" />
      <path d="M1000 62L1014 124L990 120Z" fill="#777" />
      <g clipPath={`url(#${id}-wall)`} stroke="none">
        {wallColors.map((_, i) => {
          const l = corners[i];
          const r = corners[i + 1];
          const top = Math.min(l[1], r[1]) - 40;
          const bottom = Math.max(l[1], r[1]) + 160;
          return (
            <path
              key={i}
              d={`M${leanX(l, top)} ${top}H${leanX(r, top) + 2}L${leanX(r, bottom) + 2} ${bottom}H${leanX(l, bottom)}Z`}
              fill={`url(#${id}-f${i})`}
            />
          );
        })}
      </g>
      <path d={flangeWall} fill="none" />
      <path d={edges.join("")} />
      <path d={flangeTop} fill="#bdbdbd" />
      {boltHoles.map(([x, y]) => (
        <ellipse
          key={x}
          cx={x}
          cy={y}
          rx="30"
          ry="17"
          transform={`rotate(-14 ${x} ${y})`}
          fill={`url(#${id}-hole)`}
        />
      ))}
    </g>
  );
}

function OrangeBlock() {
  const hot = "#f9a049";
  return (
    <g strokeLinejoin="round">
      <path d="M78 212L148 131L325 808L240 810Z" fill="#c9a883" fillOpacity=".85" />
      <path d="M140 212L560 220L720 815L325 808Z" fill="#8f5d28" />
      <path d="M560 220L655 222L815 823L720 815Z" fill="#b37432" />
      <path d="M655 222L700 172L858 750L815 823Z" fill="#c8823a" />
      <path d="M700 172L726 143L885 738L858 750Z" fill="#e69643" />
      <path d="M148 131L243 178Q390 210 540 184L726 143L655 222L560 220L180 212Z" fill="#ffc458" />
      <path d="M560 220L700 172L655 222Z" fill="#c8823a" />
      <path d="M240 810L308 730L325 808Z" fill="#a87c4c" />
      <path d="M720 815L858 750L815 823Z" fill="#a27b47" />

      <path d="M265 450C268 370 320 335 400 335C530 340 628 480 628 570C628 650 580 697 500 697C380 690 265 560 265 450Z" fill="url(#bore-cone)" />
      <path d="M355 450C355 380 400 350 470 350C560 350 620 430 620 500C620 570 570 602 520 602C430 595 355 530 355 450Z" fill="url(#bore-ring)" />
      <path d="M382 410C382 380 410 362 450 364C530 370 598 440 598 510C598 560 570 577 530 577C450 570 382 490 382 410Z" fill="url(#bore-floor)" />

      <g fill="none" stroke={hot} strokeWidth="9">
        <path d="M78 212L148 131L243 178Q390 212 540 182L726 143L885 738L815 823L240 810Z" />
        <path d="M78 212L655 222L815 823M140 212L325 808M148 131L308 730M125 165L140 212M560 220L720 815" />
        <path d="M560 220L700 172L655 222M700 172L858 750M240 810L308 730L325 808M720 815L858 750" strokeWidth="6" />
        <path d="M308 730L405 775L540 794L715 782L885 738" strokeWidth="7" />
      </g>
      <g fill="none" stroke={hot} strokeWidth="7">
        <path d="M265 450C268 370 320 335 400 335C530 340 628 480 628 570C628 650 580 697 500 697C380 690 265 560 265 450Z" />
        <path d="M355 450C355 380 400 350 470 350C560 350 620 430 620 500C620 570 570 602 520 602C430 595 355 530 355 450Z" />
        <path d="M382 410C382 380 410 362 450 364C530 370 598 440 598 510C598 560 570 577 530 577C450 570 382 490 382 410Z" />
        <ellipse cx="317" cy="263" rx="24" ry="35" transform="rotate(-30 317 263)" />
        <ellipse cx="413" cy="621" rx="22" ry="35" transform="rotate(-30 413 621)" />
        <ellipse cx="186" cy="313" rx="8" ry="34" transform="rotate(-18 186 313)" />
        <ellipse cx="280" cy="672" rx="8" ry="34" transform="rotate(-18 280 672)" />
        <circle cx="638" cy="323" r="31" fill="url(#screw)" stroke="#d0883a" strokeWidth="5" />
        <circle cx="738" cy="680" r="32" fill="url(#screw)" stroke="#e0913c" strokeWidth="5" />
      </g>
    </g>
  );
}

function Handle({ x, y, side, face }: { x: number; y: number; side: string; face: string }) {
  return (
    <g>
      <path d={`M${x - 6} ${y - 3}L${x - 2} ${y - 6}H${x + 6}V${y + 3}L${x + 2} ${y + 6}L${x - 5} ${y + 3}Z`} fill={side} />
      <path d={`M${x - 1} ${y - 3}L${x + 6} ${y - 6}V${y + 3}L${x + 1} ${y + 6}Z`} fill={face} />
    </g>
  );
}

function Model() {
  return (
    <svg className="block h-full w-full" aria-label="弹筒零件">
      <defs>
        <linearGradient id="body" gradientUnits="userSpaceOnUse" x1="825" y1="800" x2="1180" y2="704">
          <stop offset="0" stopColor="#666666" />
          <stop offset=".14" stopColor="#595959" />
          <stop offset=".25" stopColor="#5d5d5d" />
          <stop offset=".55" stopColor="#7a7a7a" />
          <stop offset=".85" stopColor="#8f8f8f" />
          <stop offset="1" stopColor="#848484" />
        </linearGradient>
        <linearGradient id="bore" x1="0" y1=".55" x2="1" y2=".4">
          <stop offset="0" stopColor="#949494" />
          <stop offset=".4" stopColor="#7c7c7c" />
          <stop offset=".75" stopColor="#575757" />
          <stop offset="1" stopColor="#646464" />
        </linearGradient>
        <linearGradient id="bore-cone" x1=".2" y1="0" x2=".6" y2="1">
          <stop offset=".1" stopColor="#65401c" />
          <stop offset=".5" stopColor="#d98c40" />
          <stop offset=".85" stopColor="#e2b65c" />
          <stop offset="1" stopColor="#d8893a" />
        </linearGradient>
        <linearGradient id="bore-ring" x1=".3" y1="0" x2=".5" y2="1">
          <stop offset="0" stopColor="#8a5a2a" />
          <stop offset=".5" stopColor="#cf8638" />
          <stop offset="1" stopColor="#e2b65c" />
        </linearGradient>
        <linearGradient id="bore-floor">
          <stop offset="0" stopColor="#938a80" />
          <stop offset="1" stopColor="#7c6550" />
        </linearGradient>
        <linearGradient id="screw">
          <stop offset="0" stopColor="#c9782e" />
          <stop offset=".5" stopColor="#dca24a" />
          <stop offset="1" stopColor="#a8672a" />
        </linearGradient>
        <radialGradient id="gold" cx=".35" cy=".3">
          <stop offset="0" stopColor="#e5cf7a" />
          <stop offset="1" stopColor="#8a7427" />
        </radialGradient>
      </defs>
      <g transform="translate(-391 -67)">
        <g transform="translate(790 738) scale(.3827 .3333)">
          <Flange id="lower" />
        </g>
        <path
          d="M755 545L860 923C869 950 898 963 957 964C1060 964 1163 917 1201 870C1212 853 1217 840 1214 827L1137 545Z"
          fill="url(#body)"
        />
        <path
          d="M860 923C869 950 898 963 957 964C1060 964 1163 917 1201 870C1212 853 1217 840 1214 827"
          fill="none"
          stroke="#333"
        />
        <g transform="translate(690 380) scale(.3827 .3333)">
          <Flange id="upper" />
          <path
            d="M233 500C240 300 540 157 820 157C960 160 1050 210 1050 300C1040 480 720 645 470 645C320 643 233 580 233 500Z"
            fill="url(#bore)"
            stroke="#333"
            strokeWidth="3"
          />
          <g fill="none" stroke="#b39c4a" strokeWidth="3">
            <path d="M387 465C395 345 600 247 740 247C850 247 898 290 898 335C890 445 680 552 530 552C430 552 387 510 387 465Z" />
            <path d="M642 401L524 553" strokeWidth="4" />
          </g>
          <path d="M637 401L599 230H607L647 401Z" fill="#98802f" stroke="#98802f" strokeWidth="2" />
          <path d="M588 180L609 222L603 234L595 235L587 228Z" fill="#a08732" />
          <circle cx="642" cy="401" r="12" fill="url(#gold)" />
          <circle cx="524" cy="553" r="12" fill="url(#gold)" />
          <path d="M705 652L719 688L716 698L706 700L703 690Z" fill="#9c9c9c" />
        </g>

        <g transform="translate(750 640) scale(.3444 .3333)">
          <OrangeBlock />
          <g fill="none" stroke="#d9d9d9" strokeWidth="3">
            <path d="M618 -120L654 44L486 40L528 215M654 44L568 145L613 320L447 315L528 222" />
            <path d="M654 44L700 215M700 215L380 211M700 215L545 400" />
          </g>
          <path d="M663 75L682 115L686 155L668 120Z" fill="#5f7fdc" />
          <path d="M683 150L699 212" stroke="#3450d8" strokeWidth="5" />
          <path d="M595 208L700 215L640 218Z" fill="#ea8f8f" />
          <path d="M700 217L660 280L632 300L655 262Z" fill="#a2f0b0" />
          <path d="M368 211L410 203V216Z" fill="#d8d8d8" />
          <circle cx="547" cy="396" r="8" fill="#ececec" />
        </g>

        <Handle x={832} y={708} side="#f1f1f1" face="#b5b5b5" />
        <Handle x={1074} y={618} side="#ededed" face="#9c9c9c" />
        <Handle x={1150} y={716} side="#cfcfcf" face="#a58f3e" />
        <Handle x={909} y={805} side="#d8f23c" face="#a2d52a" />
        <circle cx="908" cy="807" r="5" fill="url(#gold)" />

        <g fontSize="14" fontFamily="Liberation Sans, sans-serif">
          <text x="981" y="662" fill="#1240ee">ZC</text>
          <text x="942" y="708" fill="#d63030">XC</text>
          <text x="968" y="754" fill="#249a38">YC</text>
          <text x="953" y="596" fill="#dadada">Z</text>
          <text x="866" y="715" fill="#e6d2b4" fontSize="12">X</text>
          <text x="924" y="788" fill="#d9d9d9">Y</text>
        </g>

        {/* view triad */}
        <g transform="translate(390 980) scale(.3333)">
          <path
            d="M133 183H207L190 307H113L92 229ZM92 229H170L207 183M170 229L190 307M133 183L154 262L113 307M154 262H232"
            fill="#cbcbcb"
            stroke="#aeb0b1"
            strokeWidth="3"
          />
          <path d="M232 262L130 262" stroke="#d59c9c" strokeWidth="8" />
          <path d="M103 261L132 252V270Z" fill="#d07f7f" />
          <path d="M232 262L206 165" stroke="#1038cc" strokeWidth="12" />
          <path d="M195 130L216 166L194 172Z" fill="#0a2fd0" />
          <path d="M232 266L184 318" stroke="#2b9a2e" strokeWidth="12" />
          <path d="M160 343L172 309L194 327Z" fill="#2b9a2e" />
          <circle cx="234" cy="263" r="11" fill="#e4e4e4" />
        </g>
        <g fontSize="12" fontFamily="Liberation Sans, sans-serif">
          <text x="450" y="1023" fill="#2a58ee">Z</text>
          <text x="414" y="1071" fill="#d04848">X</text>
          <text x="438" y="1100" fill="#35a53a">Y</text>
        </g>
      </g>
    </svg>
  );
}

/* ---------- pattern feature dialog ---------- */

const dlgIcons: Record<string, ReactNode> = {
  pointDialog: (
    <g>
      <path d="M7 11H18M12.500 5V16" stroke="#222" />
      <path d="M5 17C4 21 6 24 10 24V21L15 25L10 28V26C5 25 3 22 5 17Z" fill="#ef5a18" />
      <path d="M19 25H21V27H19ZM22 25H24V27H22ZM25 25H27V27H25Z" fill="#111" />
    </g>
  ),
  vectorDialog: (
    <g>
      <path d="M16 23V9" stroke="#a00c0c" strokeWidth="1.5" />
      <path d="M16 4L19 12H13Z" fill="#d81818" />
      <path d="M5 17C4 21 6 24 10 24V21L15 25L10 28V26C5 25 3 22 5 17Z" fill="#ef5a18" />
      <path d="M19 25H21V27H19ZM22 25H24V27H22ZM25 25H27V27H25Z" fill="#111" />
    </g>
  ),
  reverse: (
    <g>
      <path d="M9 24L14 18M17 14L23 8" stroke="#1420c8" strokeWidth="2.4" />
      <path d="M26 4L25 12L19 7ZM6 27L7 19L13 24Z" fill="#1420c8" />
      <path d="M5 7L25 23" stroke="#111" strokeWidth="1.6" />
    </g>
  ),
};

function SmallButton({ icon, label }: { icon: string; label: string }) {
  return (
    <button type="button" aria-label={label} className="h-8 w-8 shrink-0 border border-[#a3a3a3] bg-inherit">
      <svg viewBox="1 1 30 30" className="block h-full w-full">
        {dlgIcons[icon]}
      </svg>
    </button>
  );
}

function SplitButton({ label, children }: { label: string; children: ReactNode }) {
  return (
    <div className="flex h-10 w-[66px] shrink-0 border border-[#a3a3a3]">
      <button type="button" aria-label={label} className="w-[39px] border-r border-[#a3a3a3]">
        <svg viewBox="0 0 38 38" className="block h-[38px] w-[38px]">
          {children}
        </svg>
      </button>
      <button type="button" aria-label={`${label}选项`} className="flex flex-1 items-center justify-center">
        <Tri small />
      </button>
    </div>
  );
}

function Section({ title, children }: { title: string; children: ReactNode }) {
  const [open, setOpen] = useState(true);
  return (
    <section className="border-b border-[#c6c6c6] bg-white pb-2">
      <button
        type="button"
        aria-expanded={open}
        onClick={() => setOpen(!open)}
        className="flex h-[38px] w-full items-center justify-between pr-[5px] pb-[6px] pl-[7px] text-[22px] leading-8 text-[#00688b]"
      >
        <span>{title}</span>
        <Chevron open={open} />
      </button>
      {open && <div className="px-[9px]">{children}</div>}
    </section>
  );
}

function Group({ title, children }: { title: string; children?: ReactNode }) {
  return (
    <div className="border border-[#d9d9d9] bg-[#efefef]">
      <button
        type="button"
        aria-expanded={!!children}
        className="flex h-[29px] w-full items-center justify-between pr-[6px] pb-[2px] pl-2 leading-7 text-[#00688b]"
      >
        <span>{title}</span>
        <Chevron open={!!children} small />
      </button>
      {children && <div className="px-2 pt-[7px] pb-2">{children}</div>}
    </div>
  );
}

function PickRow({ label, children }: { label: string; children: ReactNode }) {
  return (
    <div className="flex h-10 items-center gap-[2px]">
      <span className="ml-1 flex flex-1 items-center gap-[6px]">
        <GreenCheck />
        {label}
      </span>
      {children}
    </div>
  );
}

function Drop({ id, value, icon }: { id: string; value: string; icon?: ReactNode }) {
  return (
    <div className="relative w-[152px]">
      <select
        id={id}
        className={`block w-full appearance-none border border-[#a3a3a3] bg-white ${
          icon ? "h-[34px] pl-8" : "h-8 pl-1"
        }`}
      >
        <option>{value}</option>
      </select>
      {icon && <span className="pointer-events-none absolute top-[5px] left-[5px]">{icon}</span>}
      <span className="pointer-events-none absolute inset-y-0 right-[7px] flex items-center">
        <Tri />
      </span>
    </div>
  );
}

function Tick({ id, label }: { id: string; label: string }) {
  return (
    <div className="flex items-center gap-1">
      <input
        id={id}
        type="checkbox"
        className="h-[22px] w-[22px] appearance-none rounded border border-[#555] bg-[#f3f3f3]"
      />
      <label htmlFor={id}>{label}</label>
    </div>
  );
}

function CircleIcon() {
  const pts = [[12, 2], [19, 5], [22, 12], [19, 19], [12, 22], [5, 19], [2, 12], [5, 5]];
  return (
    <svg viewBox="0 0 24 24" className="h-6 w-6" aria-hidden="true">
      <circle cx="12" cy="12" r="9.500" fill="none" stroke="#222" />
      {pts.map(([x, y]) => (
        <circle key={`${x}-${y}`} cx={x} cy={y} r="2" fill="#c80c0c" />
      ))}
    </svg>
  );
}

function InferredPoint() {
  return (
    <g stroke="#b515c0" strokeWidth="1.5" fill="none">
      <path d="M13 11H22V23M15 23H29M18 26H25M20 29H23" />
    </g>
  );
}

function PatternDialog() {
  return (
    <form className="absolute top-[102px] right-[152px] w-[429px] border border-t-0 border-[#dcdcdc] bg-[#efefef] text-[18px] leading-7">
      <div className="-mx-px flex h-8 items-center bg-[#559fb8] pr-3 pl-[11px] text-white">
        <svg viewBox="0 0 16 16" className="mr-[10px] h-4 w-4" aria-hidden="true">
          <circle cx="8" cy="8" r="4.600" fill="none" stroke="#fff" strokeWidth="2" />
          <path d="M8 0V3M8 13V16M0 8H3M13 8H16M2.300 2.300L4.500 4.500M11.500 11.500L13.700 13.700M2.300 13.700L4.500 11.500M11.500 4.500L13.700 2.300" stroke="#fff" strokeWidth="2.400" />
          <circle cx="8" cy="8" r="1" fill="#fff" />
        </svg>
        <h2 className="flex-1 text-[22px]">阵列特征</h2>
        <button type="button" aria-label="重置" className="mr-4">
          <svg viewBox="0 0 14 14" className="h-[14px] w-[14px]">
            <path d="M3 5C1 9 4 12.500 7 12.500C12 12.500 14 7 11 3.500C10 2.500 9 2 8 2" fill="none" stroke="#fff" strokeWidth="1.8" />
            <path d="M0 5L4 2L5 7Z" fill="#fff" />
          </svg>
        </button>
        <button type="button" aria-label="关闭">
          <svg viewBox="0 0 12 12" className="h-3 w-3">
            <path d="M1 1L11 11M11 1L1 11" stroke="#fff" strokeWidth="2.200" />
          </svg>
        </button>
      </div>

      <div className="flex flex-col gap-[3px] px-[5px] pt-1">
        <Section title="要形成阵列的特征">
          <div className="flex h-10 gap-[2px]">
            <button type="button" className="flex flex-1 items-center gap-[6px] bg-[#ffdf78] pl-1">
              <GreenCheck />
              选择特征 (5)
            </button>
            <button type="button" aria-label="选择特征" className="w-10 bg-[#ffdf78]">
              <svg viewBox="0 0 40 40" className="h-10 w-10">
                <path d="M7 19L20 13L34 19V29L20 34L7 29Z" fill="#e6e6e8" stroke="#555" />
                <path d="M7 19L20 24L34 19M20 24V34" fill="none" stroke="#555" />
                <path d="M20 24L34 19V29L20 34Z" fill="#9b9ca0" />
                <path d="M16 7V18C17 21 25 21 26 18V7Z" fill="#fb7a22" stroke="#d23008" />
                <path d="M18 8V18" stroke="#ffd35c" strokeWidth="3" />
                <ellipse cx="21" cy="7" rx="5" ry="2" fill="#fd4f1a" stroke="#d23008" strokeWidth=".7" />
              </svg>
            </button>
          </div>
        </Section>

        <Section title="参考点">
          <PickRow label="指定点">
            <SmallButton icon="pointDialog" label="点对话框" />
            <SplitButton label="自动判断的点">
              <InferredPoint />
            </SplitButton>
          </PickRow>
        </Section>

        <Section title="阵列定义">
          <div className="mb-1 flex items-center justify-between">
            <label htmlFor="layout">布局</label>
            <Drop id="layout" value="圆形" icon={<CircleIcon />} />
          </div>
          <div className="flex flex-col gap-[2px]">
            <Group title="旋转轴">
              <div className="flex flex-col gap-[2px]">
                <PickRow label="指定矢量">
                  <SmallButton icon="reverse" label="反向" />
                  <SmallButton icon="vectorDialog" label="矢量对话框" />
                  <SplitButton label="自动判断的矢量">
                    <path d="M11 32V12" stroke="#c01010" strokeWidth="1.500" />
                    <path d="M11 4L15 13H7Z" fill="#d01414" />
                    <path d="M20 18H28V27M21 27H34M24 30H31M26 33H29" fill="none" stroke="#b515c0" strokeWidth="1.500" />
                  </SplitButton>
                </PickRow>
                <PickRow label="指定点">
                  <SmallButton icon="pointDialog" label="点对话框" />
                  <SplitButton label="圆心">
                    <circle cx="19" cy="19" r="14" fill="none" stroke="#111" strokeWidth="1.300" />
                    <path d="M14 19H24M19 14V24" stroke="#e01010" />
                    <circle cx="19" cy="19" r="2.500" fill="#e01010" />
                  </SplitButton>
                </PickRow>
              </div>
            </Group>

            <Group title="斜角方向">
              <div className="flex flex-col gap-[2px]">
                <div className="flex items-center justify-between">
                  <label htmlFor="spacing">间距</label>
                  <Drop id="spacing" value="数量和跨距" />
                </div>
                <div className="flex items-center justify-between">
                  <label htmlFor="count">数量</label>
                  <div className="flex h-[30px] w-[115px] items-center justify-between border border-[#a3a3a3] bg-white pr-[7px] pl-1">
                    <input id="count" defaultValue="4" className="h-6 w-3 bg-[#0078d7] text-[20px] text-white" />
                    <Tri />
                  </div>
                </div>
                <div className="flex items-center justify-between">
                  <label htmlFor="span">跨角</label>
                  <div className="flex h-8 w-[152px] items-center border border-[#a3a3a3] bg-white pr-[7px] pl-1">
                    <input id="span" defaultValue="360" className="w-[86px] text-[20px]" />
                    <span className="flex-1">°</span>
                    <Tri />
                  </div>
                </div>
              </div>
            </Group>

            <Group title="辐射">
              <Tick id="concentric" label="创建同心成员" />
            </Group>
            <Group title="实例点" />
            <div className="mb-[2px] flex h-10 items-center justify-between">
              <Tick id="sheet" label="使用电子表格" />
              <button type="button" aria-label="电子表格" className="h-10 w-10 border border-[#a3a3a3]">
                <svg viewBox="0 0 38 38" className="h-[38px] w-[38px]">
                  <path d="M5 7H31V31H5Z" fill="#fff" stroke="#888" />
                  <path d="M5 15H31M5 19H31M5 23H31M5 27H31M10 11V31M15 11V31M20 11V31M26 11V31" stroke="#666" strokeWidth=".8" />
                  <path d="M5 6H31V11H5Z" fill="#0b850b" />
                  <path d="M17 22H23L26 25L29 22H34L28 29L34 34H28L25 31L22 34H16L23 28Z" fill="#087008" />
                  <path d="M19 23L31 34" stroke="#fff" strokeWidth="1" />
                </svg>
              </button>
            </div>
            <Group title="阵列设置" />
          </div>
        </Section>

        <Section title="阵列方法">
          <div className="mb-[2px] flex items-center justify-between">
            <label htmlFor="method">方法</label>
            <Drop id="method" value="变化" />
          </div>
          <Group title="可重用的引用" />
        </Section>
      </div>

      <div className="mt-[5px] flex items-center justify-end gap-[2px] pr-[9px]">
        <span>显示结果</span>
        <button type="button" aria-label="显示结果" className="h-8 w-8 border border-[#a3a3a3]">
          <svg viewBox="0 0 30 30" className="h-[30px] w-[30px]">
            <path d="M19 18L26 26" stroke="#444" strokeWidth="4" />
            <path d="M18 17L20 20" stroke="#e0b030" strokeWidth="3" />
            <circle cx="12" cy="11" r="8.500" fill="#f6f6f8" stroke="#555" strokeWidth="1.400" />
            <path d="M7 10C8 6 11 5 14 6" fill="none" stroke="#fff" strokeWidth="2" />
          </svg>
        </button>
      </div>
      <div className="mt-3 mb-[10px] flex justify-end gap-[5px] pr-[15px]">
        <button type="button" className="h-8 w-[66px] bg-[#73b3c9] text-white">
          确定
        </button>
        <button type="button" className="h-8 w-[66px] border border-[#a3a3a3] bg-[#dedede]">
          取消
        </button>
      </div>
    </form>
  );
}

/* ---------- graphics window ---------- */

function GraphicsWindow() {
  return (
    <main className="flex min-w-0 flex-1 flex-col">
      <div className="flex h-[30px] shrink-0 border-b-2 border-[#559fb8] bg-white">
        <div className="flex h-[30px] w-[190px] items-center bg-[#559fb8] pb-[2px] pl-2 text-[18px] leading-7 whitespace-nowrap text-white">
          <svg viewBox="0 0 20 22" className="mr-[6px] h-[22px] w-5" aria-hidden="true">
            <path d="M1 4L8 1L11 3V12L15 11L19 14V18L11 22L1 17Z" fill="#1b46d8" />
            <path d="M1 4L5 6V16L12 19L11 22L1 17Z" fill="#3f83fa" />
            <path d="M5 6L11 3V12L5 16Z" fill="#2450dc" />
            <path d="M1 4L8 1L11 3L5 6Z" fill="#b6d6ff" />
            <path d="M5 16L11 12L15 11L19 14L12 18Z" fill="#9cc6ff" stroke="#2350d0" strokeWidth=".6" />
          </svg>
          <span className="flex-1">弹筒零件.prt</span>
          <svg viewBox="0 0 16 20" className="h-5 w-4" aria-hidden="true">
            <path d="M13 6V3H1V18H13V15" fill="none" stroke="#fff" strokeWidth="2" />
            <path d="M4 1H10V4H4Z" fill="#fff" />
            <path d="M7 14L8 11L14 6L16 8L10 13Z" fill="#fff" />
          </svg>
          <button type="button" aria-label="关闭" className="mr-[10px] ml-3">
            <svg viewBox="0 0 10 10" className="h-[10px] w-[10px]">
              <path d="M1 1L9 9M9 1L1 9" stroke="#b5bcc0" strokeWidth="1.600" />
            </svg>
          </button>
        </div>
      </div>
      <div className="relative min-h-0 flex-1 overflow-hidden bg-[#d3d4d6]">
        <Model />
        <PatternDialog />
        <p className="absolute right-[5px] bottom-0 flex items-center font-['Liberation_Mono','Noto_Sans_CJK_SC',monospace] text-[13px] leading-6 whitespace-pre text-[#777] [text-shadow:1px_1px_0_#fff]">
          UG<span className="text-[16px]">爱好者论坛</span> WWW.UGSNX.COM
        </p>
        <svg viewBox="0 0 22 14" className="absolute right-0 bottom-0 h-[14px] w-[22px]" aria-hidden="true">
          <path d="M2 14C4 6 12 1 22 1V14Z" fill="#f2571d" />
          <path d="M12 14C14 10 18 8 22 8V14Z" fill="#fff" />
        </svg>
      </div>
    </main>
  );
}

export default function App() {
  return (
    <div className="flex h-screen flex-col overflow-hidden bg-white font-['Open_Sans','Noto_Sans_CJK_SC',sans-serif] text-[#1c1c1c]">
      <Toolbar />
      <div className="flex min-h-0 flex-1">
        <Navigator />
        <GraphicsWindow />
      </div>
    </div>
  );
}
